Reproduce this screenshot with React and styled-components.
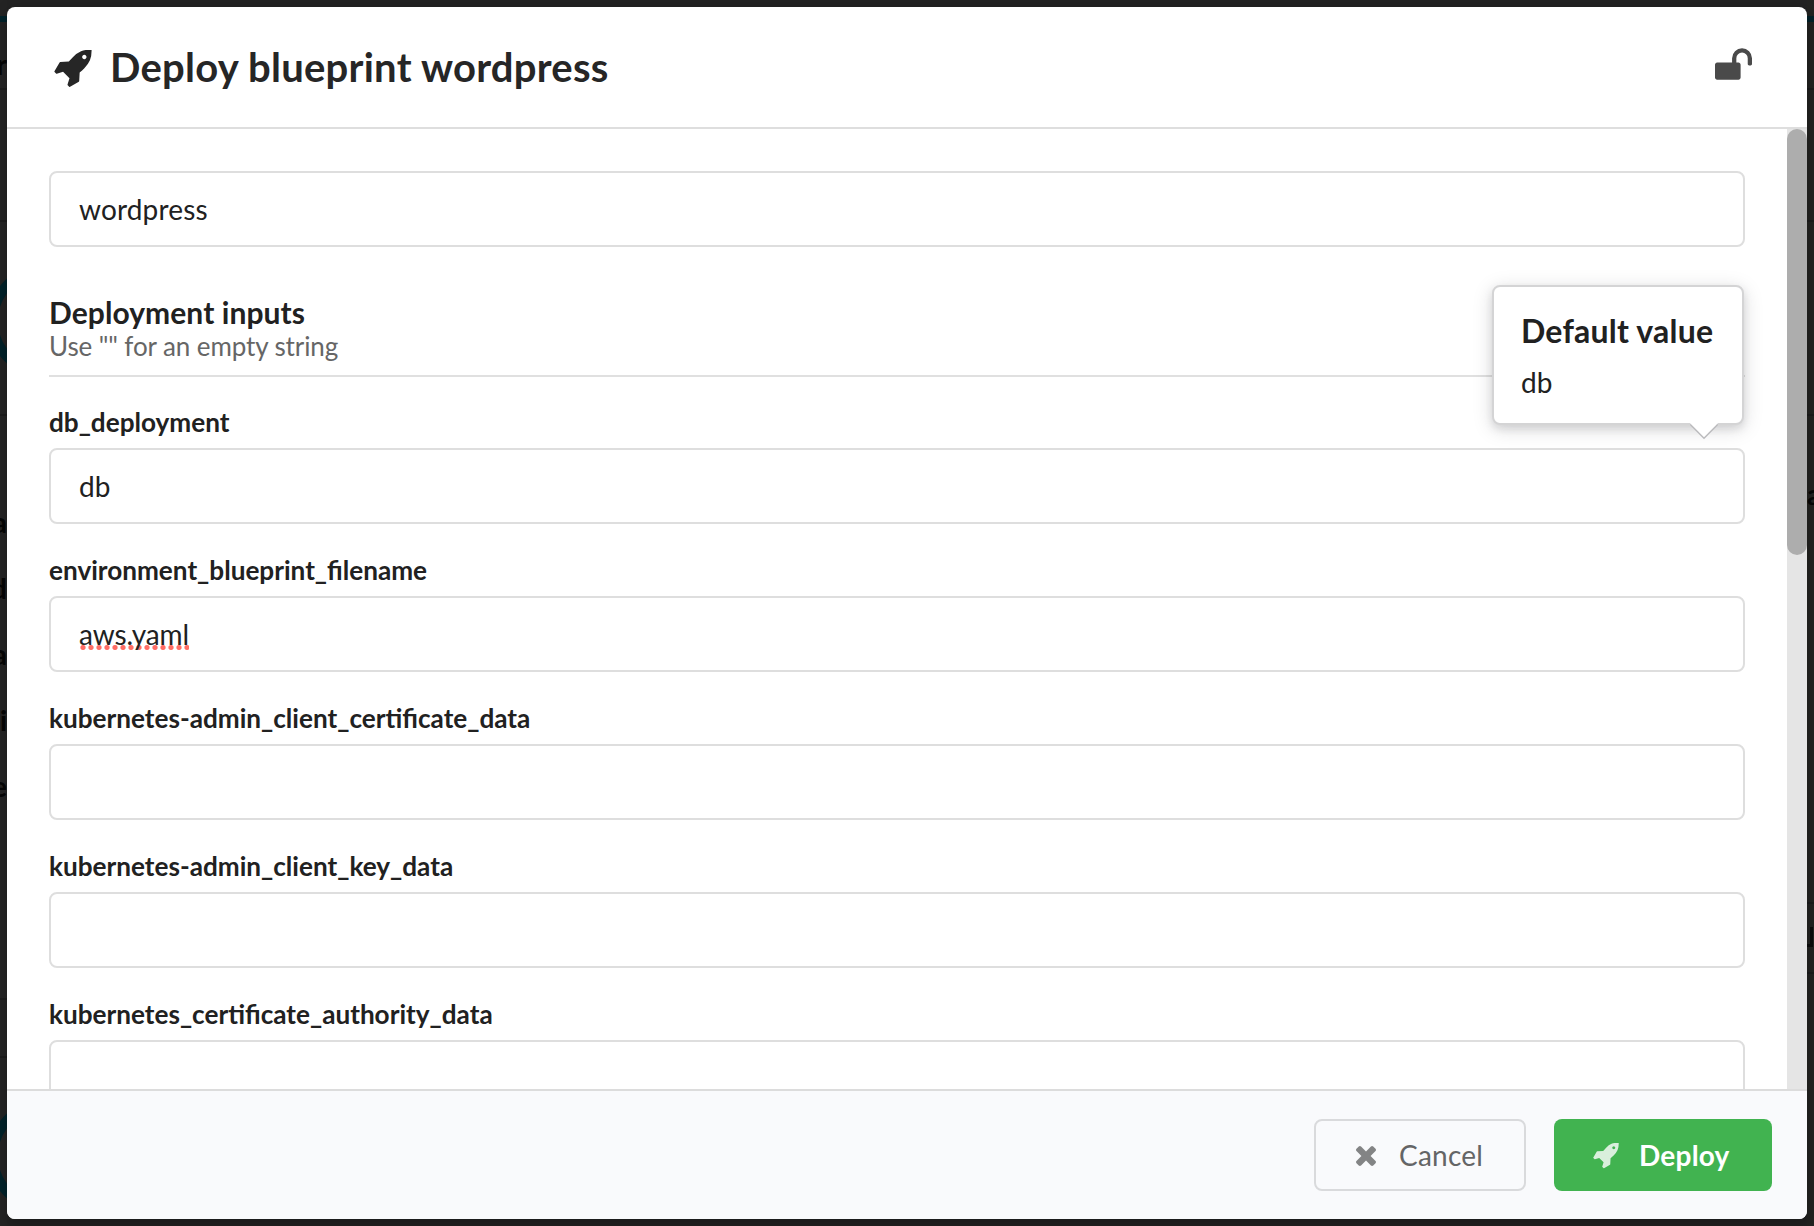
import React from "react";
import styled, { createGlobalStyle } from "styled-components";

const Global = createGlobalStyle`
  * { box-sizing: border-box; }
  body { margin: 0; background: #232323; font-family: Lato, "Open Sans", sans-serif; color: #212121; }
`;

const Page = styled.div`
  display: flex;
  width: 1814px;
  height: 1226px;
  background: #232323;
  overflow: hidden;
`;

const Strip = styled.div`
  display: flex;
  flex-direction: column;
  align-items: ${(p) => (p.$right ? "flex-start" : "flex-end")};
  flex: none;
  width: 7px;
  height: 1226px;
  padding-top: 47px;
  overflow: hidden;
  background:
    linear-gradient(#02222a, #02222a) 0 16px / 7px 6px no-repeat,
    linear-gradient(#1c1c1c, #1c1c1c) 0 88px / 7px 2px no-repeat,
    linear-gradient(#1c1c1c, #1c1c1c) 0 220px / 7px 2px no-repeat,
    linear-gradient(#1c1c1c, #1c1c1c) 0 414px / 7px 2px no-repeat,
    linear-gradient(#1c1c1c, #1c1c1c) 0 ${(p) => (p.$right ? 902 : 998)}px / 7px 2px no-repeat,
    linear-gradient(#1c1c1c, #1c1c1c) 0 ${(p) => (p.$right ? 972 : 1056)}px / 7px 2px no-repeat,
    ${(p) => (p.$right ? "#242422" : "#242424")};
`;

const Letter = styled.span`
  font-size: 28px;
  line-height: 34px;
  font-weight: 700;
  color: #050505;
`;

const Letters = styled.div`
  display: flex;
  flex-direction: column;
  align-items: inherit;
  gap: 32px;
  padding-top: ${(p) => (p.$right ? 430 : 127)}px;
`;

const Ring = styled.i`
  flex: none;
  align-self: flex-start;
  width: 114px;
  height: 114px;
  margin: ${(p) => p.$gap}px 0 0 -12px;
  border: 10px solid #02222a;
  border-radius: 50%;
`;

const Corner = styled.i`
  width: 6px;
  height: 20px;
  margin-top: 416px;
  border: solid #0c0c0c;
  border-width: 0 3px 3px 0;
`;

const Modal = styled.section`
  position: relative;
  display: flex;
  flex-direction: column;
  flex: none;
  width: 1800px;
  height: 1212px;
  margin-top: 7px;
  border-radius: 8px;
  box-shadow: 2px 6px 14px 4px rgba(0,0,0,.2);
  background: #fff;
`;

const Header = styled.header`
  display: flex;
  align-items: center;
  justify-content: space-between;
  height: 122px;
  flex: none;
  padding: 0 55px 0 47px;
  border-bottom: 2px solid #dedede;
`;

const Title = styled.h1`
  display: flex;
  align-items: center;
  gap: 18px;
  margin: 0;
  font-size: 40px;
  line-height: 52px;
  font-weight: 700;
  letter-spacing: .25px;
  color: #262626;
  svg { display: block; margin-top: 3px; }
`;

const LockIcon = styled.svg`
  display: block;
  margin-bottom: 6px;
`;

const Body = styled.div`
  display: flex;
  flex: 1;
  min-height: 0;
`;

const Form = styled.form`
  flex: 1;
  height: 960px;
  padding: 42px 42px 0;
  overflow: hidden;
`;

const Track = styled.div`
  width: 20px;
  height: 960px;
  background: #e5e5e5;
`;

const Thumb = styled.div`
  height: 426px;
  border-radius: 10px;
  background: #adadad;
`;

const Input = styled.div`
  display: flex;
  align-items: center;
  height: 76px;
  padding: 0 28px;
  border: 2px solid #dedede;
  border-radius: 8px;
  font-size: 28px;
  line-height: 34px;
  letter-spacing: .15px;
`;

const Misspelled = styled.span`
  letter-spacing: -.15px;
  padding-bottom: 1px;
  background: radial-gradient(circle at 4px 2.5px, rgba(255,60,50,.75) 2px, rgba(255,60,50,0) 3.2px) 0 28px / 8px 5px repeat-x;
`;

const Divider = styled.div`
  height: 130px;
  margin-bottom: 28px;
  padding-top: 46px;
  border-bottom: 2px solid #e0e0e0;
`;

const SectionTitle = styled.h2`
  margin: 0;
  font-size: 30px;
  line-height: 38px;
  font-weight: 700;
  letter-spacing: .07px;
`;

const Hint = styled.div`
  font-size: 26px;
  line-height: 30px;
  letter-spacing: -.1px;
  color: #666;
`;

const Field = styled.div`
  height: 148px;
`;

const Label = styled.label`
  display: block;
  height: 43px;
  font-size: 26.15px;
  line-height: 34px;
  font-weight: 700;
`;

const Popup = styled.aside`
  position: absolute;
  left: 1485px;
  top: 278px;
  width: 252px;
  height: 140px;
  padding: 25px 27px;
  border: 2px solid #d4d4d5;
  border-radius: 8px;
  background: #fff;
  box-shadow: 0 4px 8px rgba(34,36,38,.12), 0 4px 20px rgba(34,36,38,.15);
  font-size: 28px;
  line-height: 40px;
  &::after {
    content: "";
    position: absolute;
    left: 200px;
    top: 126px;
    width: 20px;
    height: 20px;
    transform: rotate(45deg);
    background: #fff;
    box-shadow: 1.5px 1.5px 0 #bababc;
  }
`;

const PopupTitle = styled.div`
  margin-bottom: 12px;
  font-size: 32px;
  line-height: 38px;
  font-weight: 700;
  letter-spacing: .22px;
  white-space: nowrap;
`;

const Footer = styled.footer`
  display: flex;
  justify-content: flex-end;
  gap: 28px;
  height: 130px;
  padding: 28px 35px 0 0;
  border-top: 2px solid #dcdcdc;
  border-radius: 0 0 8px 8px;
  background: #f9fafc;
`;

const Button = styled.button`
  display: flex;
  align-items: center;
  height: 72px;
  width: ${(p) => (p.$primary ? 218 : 212)}px;
  padding: 0 0 0 ${(p) => (p.$primary ? 39 : 40)}px;
  gap: ${(p) => (p.$primary ? 20 : 23)}px;
  border: ${(p) => (p.$primary ? "0" : "2px solid #d9dadc")};
  border-radius: 8px;
  background: ${(p) => (p.$primary ? "#41b350" : "transparent")};
  color: ${(p) => (p.$primary ? "#fff" : "#646566")};
  font: ${(p) => (p.$primary ? 700 : 400)} 28px/34px Lato, sans-serif;
  letter-spacing: .22px;
  svg { display: block; margin-top: 2px; }
`;

const Rocket = ({ size, ...rest }) => (
  <svg width={size} height={size} viewBox="16 16 1664 1664" fill="currentColor" {...rest}>
    <path d="M1440 320q0-40-28-68t-68-28-68 28-28 68 28 68 68 28 68-28 28-68zm224-288q0 249-75.500 430.500t-253.500 360.500q-81 80-195 176l-20 379q-2 16-16 26l-384 224q-7 4-16 4-12 0-23-9l-64-64q-13-14-8-32l85-276-281-281-276 85q-3 1-9 1-14 0-23-9l-64-64q-17-19-5-39l224-384q10-14 26-16l379-20q96-114 176-195 188-187 358-258t431-71q14 0 24 9.500t10 22.500z" />
  </svg>
);

const Unlock = () => (
  <LockIcon width="37" height="32" viewBox="0 0 1664 1408" fill="#4a4a4a">
    <path d="M1664 448v256q0 26-19 45t-45 19h-64q-26 0-45-19t-19-45v-256q0-106-75-181t-181-75-181 75-75 181v192h96q40 0 68 28t28 68v576q0 40-28 68t-68 28h-960q-40 0-68-28t-28-68v-576q0-40 28-68t68-28h672v-192q0-185 131.500-316.500t316.500-131.500 316.500 131.500 131.500 316.500z" />
  </LockIcon>
);

const Cross = () => (
  <svg width="20" height="20" viewBox="0 0 1188 1188" fill="#838485">
    <path d="M1188 956q0 40-28 68l-136 136q-28 28-68 28t-68-28l-294-294-294 294q-28 28-68 28t-68-28l-136-136q-28-28-28-68t28-68l294-294-294-294q-28-28-28-68t28-68l136-136q28-28 68-28t68 28l294 294 294-294q28-28 68-28t68 28l136 136q28 28 28 68t-28 68l-294 294 294 294q28 28 28 68z" />
  </svg>
);

const fields = [
  { name: "db_deployment", value: "db" },
  { name: "environment_blueprint_filename", value: <Misspelled>aws.yaml</Misspelled> },
  { name: "kubernetes-admin_client_certificate_data" },
  { name: "kubernetes-admin_client_key_data" },
  { name: "kubernetes_certificate_authority_data" },
];

export default function App() {
  return (
    <Page>
      <Global />
      <Strip>
        <Letter>r</Letter>
        <Ring $gap={183} />
        <Letters>
          {["a", "d", "a", "i", "e"].map((c, i) => (
            <Letter key={i}>{c}</Letter>
          ))}
        </Letters>
        <Ring $gap={296} />
      </Strip>
      <Modal>
        <Header>
          <Title>
            <Rocket size={38} />
            Deploy blueprint wordpress
          </Title>
          <Unlock />
        </Header>
        <Body>
          <Form>
            <Input>wordpress</Input>
            <Divider>
              <SectionTitle>Deployment inputs</SectionTitle>
              <Hint>Use "" for an empty string</Hint>
            </Divider>
            {fields.map((f) => (
              <Field key={f.name}>
                <Label>{f.name}</Label>
                <Input>{f.value}</Input>
              </Field>
            ))}
          </Form>
          <Track>
            <Thumb />
          </Track>
        </Body>
        <Footer>
          <Button type="button">
            <Cross />
            Cancel
          </Button>
          <Button type="button" $primary>
            <Rocket size={26} opacity=".8" />
            Deploy
          </Button>
        </Footer>
        <Popup>
          <PopupTitle>Default value</PopupTitle>
          db
        </Popup>
      </Modal>
      <Strip $right>
        <Letters $right>
          <Letter>a</Letter>
        </Letters>
        <Corner />
      </Strip>
    </Page>
  );
}
